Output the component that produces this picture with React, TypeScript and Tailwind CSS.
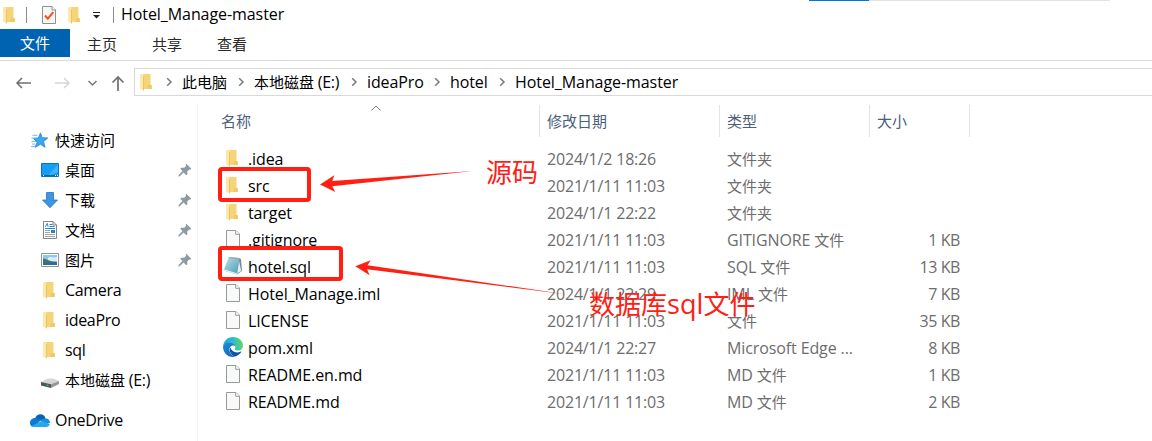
import type { ReactNode } from "react";

/* Splits a label into CJK and Latin runs so that each gets its own metrics. */
function Txt({ children, latin = "text-[16px] tracking-[-0.11px]" }: { children: string; latin?: string }) {
  const runs = children.match(/[\u4e00-\u9fff]+|[^\u4e00-\u9fff]+/g) ?? [];
  return (
    <span className="whitespace-pre">
      {runs.map((run, i) => (
        <span key={i} className={/[\u4e00-\u9fff]/.test(run) ? "" : `leading-[20px] ${latin}`}>
          {run}
        </span>
      ))}
    </span>
  );
}

function Folder() {
  return (
    <svg width="14" height="18" viewBox="0 0 14 18" className="shrink-0">
      <path d="M4 1h7.500v11.500h1.200V16H4z" fill="#f6d579" />
      <path d="M8.700 12h4v4h-4z" fill="#f0c966" />
      <path d="M1 1h3l1 2v14.500L1 15.800z" fill="#fce9a9" />
      <path d="M4 2.600l1 .9v14L4 17z" fill="#e9c369" />
    </svg>
  );
}

function Page() {
  return (
    <svg width="16" height="20" viewBox="0 0 16 20" className="shrink-0">
      <path d="M1.500 1.500h9.500l3.500 3.500v13.500h-13z" fill="#f8f9f9" stroke="#989898" />
      <path d="M10.700 1.500v3.800h3.800" fill="#fff" stroke="#989898" />
    </svg>
  );
}

function SqlIcon() {
  return (
    <svg width="20" height="20" viewBox="0 0 20 20" className="shrink-0">
      <defs>
        <linearGradient id="note" x1="0" y1="0" x2="1" y2="1">
          <stop offset="0" stopColor="#bfe4ec" />
          <stop offset="1" stopColor="#4799b3" />
        </linearGradient>
      </defs>
      <path d="M16 2l2 1 1 12-5 3.500z" fill="#7b8b92" />
      <path d="M16 5l2.200 10-4.200 2.500z" fill="#e8eeee" />
      <path d="M6 1l10.500 1L14 18.500 .5 14.500z" fill="url(#note)" />
      <path d="M6 1l10.500 1-.2 1.400L5.500 2.300z" fill="#9aaab0" />
      <path d="M.5 14.500L14 18.500l.2-1.200L1 13.300z" fill="#dff0f3" />
    </svg>
  );
}

function Edge() {
  return (
    <svg width="20" height="20" viewBox="0 0 20 20" className="shrink-0">
      <defs>
        <linearGradient id="eg" x1="0" y1="0.5" x2="1" y2="0.4">
          <stop offset="0" stopColor="#1ba3e2" />
          <stop offset="0.5" stopColor="#2dbdcb" />
          <stop offset="1" stopColor="#62d957" />
        </linearGradient>
        <linearGradient id="eb" x1="0" y1="0" x2="0.6" y2="1">
          <stop offset="0" stopColor="#1791de" />
          <stop offset="1" stopColor="#1468bd" />
        </linearGradient>
      </defs>
      <path d="M0 9.500C.5 4 4.600 0 10 0c6 0 10 4.300 10 8.600 0 3-2.200 5-5 5-2.400 0-3.800-.9-3.500-1.600.3-.6.900-1 .900-2.300C12.400 7.500 10 5.700 6.500 5.700 3 5.700.8 7.500 0 9.500z" fill="url(#eg)" />
      <path d="M0 9.500C.7 7 3.300 5.600 6.200 5.600c3.600 0 6.100 1.900 6.200 4-.7-.8-1.600-1.200-2.700-1C7.500 9 6.200 11 6.400 13.300c.3 3 2.600 5.400 5.400 6.400-.6.200-1.200.3-1.800.3C4.300 20 0 15.500 0 9.500z" fill="url(#eb)" />
      <path d="M7.300 10.500c-1.800 4 1.400 8.500 5 9 2.300-.5 4.600-2.200 6-4.400.3-.5-.1-.8-.5-.6-4.500 2.200-9.300.2-10.500-4z" fill="#12539f" />
      <path d="M12.300 9.500c0 1.500-1.200 2-1 2.700.3.800 1.600 1.300 3.200 1.400-3 .7-6-.7-6.500-3 .6-1.800 3.300-2.600 4.300-1.100z" fill="#fff" />
    </svg>
  );
}

function Pin() {
  return (
    <svg width="14" height="14" viewBox="0 0 14 14" className="shrink-0">
      <path d="M8.300.8l5 4.900-1.100 1-1-.3-2 2 .2 2.900-1.100 1-2.700-2.700L1.400 13.500l-1-.3.3-1.300 3.800-3.800-2.300-2.400 1-1 3 .1 2-2-.6-1z" fill="#8d99a3" />
    </svg>
  );
}

function Chevron() {
  return (
    <svg width="7" height="10" viewBox="0 0 7 10" className="shrink-0">
      <path d="M1.200 1.200L5 5 1.200 8.800" fill="none" stroke="#7a7a7a" strokeWidth="1.500" />
    </svg>
  );
}

function Star() {
  return (
    <svg width="18" height="16" viewBox="1 0 19 17">
      <path d="M11 1l1.800 5 6 .3-4.500 3.800 1.600 6.200L11 13l-5.600 3.300 2-5.500-3.800-4 5.200-.5z" fill="#39a8ef" stroke="#1b7fcf" strokeWidth=".8" />
      <path d="M2.500 3.500h5.200M1.500 6.500H6M1.500 10h5M2 12.800h3.500M1 15.500h4" stroke="#61b7ee" strokeWidth="1" />
    </svg>
  );
}

function Desktop() {
  return (
    <svg width="18" height="14" viewBox="0 0 18 14">
      <path d="M.5.5h17v13H.5z" fill="#169df5" stroke="#0b73bd" />
      <path d="M17 1v8L7 13z" fill="#42b2fb" />
      <path d="M1 12.500h16" stroke="#0868af" />
      <path d="M2 12.500h1m11 0h1m1 0h1" stroke="#fff" />
    </svg>
  );
}

function Download() {
  return (
    <svg width="18" height="18" viewBox="0 0 18 18">
      <path d="M5.500 1.500h7v7.500h4L9 16.800 1.500 9h4z" fill="#3c95e3" stroke="#2478c5" strokeWidth=".8" />
    </svg>
  );
}

function Doc() {
  return (
    <svg width="16" height="18" viewBox="0 0 16 18">
      <path d="M1.500.5H11l3.500 3.500v13.500h-13z" fill="#fff" stroke="#858585" />
      <path d="M11 .5V4h3.500" fill="none" stroke="#858585" />
      <path d="M3.300 5.800l2-3.500.8 3.500M7.500 3.500h3M7.500 5.500h5M3 7.500h10" fill="none" stroke="#2189d5" />
      <path d="M3 9.500h5M3 11.500h5M3 13.500h10M3 15.500h10" stroke="#9aa3a8" />
      <path d="M9 9h4v3H9z" fill="#3b80ad" />
    </svg>
  );
}

function Picture() {
  return (
    <svg width="18" height="14" viewBox="0 0 18 14">
      <path d="M.5.5h17v13H.5z" fill="#fff" stroke="#929292" />
      <path d="M2 2h14v10H2z" fill="#8fc6ee" />
      <path d="M7 5c2-2 3 0 9-1v4H7z" fill="#d9edf7" />
      <path d="M2 5.500c4 .2 6 2.500 9 3l5 .5v1H2z" fill="#3b7962" />
      <path d="M2 9.500h14V12H2z" fill="#326a99" />
    </svg>
  );
}

function Drive() {
  return (
    <svg width="18" height="10" viewBox="0 0 18 10">
      <path d="M0 4l7-3.500h5L18 3l-8 3.500z" fill="#d5d5d8" />
      <path d="M0 4l10 2.300V10L0 7.500z" fill="#4e5355" />
      <path d="M10 6.300L18 3v3l-8 4z" fill="#96979b" />
      <path d="M5.500 7.200h2" stroke="#42d15c" strokeWidth="1.200" />
    </svg>
  );
}

function Cloud() {
  return (
    <svg width="20" height="13" viewBox="0 0 20 13">
      <path d="M5 4.500C6.500-.5 14-1.500 15.500 4.500l-3 3z" fill="#0b62b5" />
      <path d="M4.500 13C1 13 0 11 0 8.800 0 6 2.500 4 5.500 4c2 0 3.500 1.200 5 2.200L5 13z" fill="#0c79d2" />
      <path d="M10 6l5.500-1.800C18.500 4.500 20 6.500 20 9l-5 1z" fill="#1590df" />
      <path d="M1.500 12L12 6.700l7.800 3.600c-.5 1.800-1.800 2.700-3.800 2.700H4.500C3.200 13 2.200 12.700 1.500 12z" fill="#29a7eb" />
    </svg>
  );
}

function NavItem({ icon, label, pinned, root }: { icon: ReactNode; label: string; pinned?: boolean; root?: boolean }) {
  return (
    <div className={`flex h-[30px] items-center pr-[5px] ${root ? "pl-[30px]" : "pl-10"}`}>
      <span className="flex w-5 shrink-0 items-center justify-center">{icon}</span>
      <span className="ml-[5px] flex-1">
        <Txt latin="text-[16px] tracking-[-0.32px]">{label}</Txt>
      </span>
      {pinned && <Pin />}
    </div>
  );
}

const files = [
  { name: ".idea", date: "2024/1/2 18:26", type: "文件夹", size: "", icon: "folder" },
  { name: "src", date: "2021/1/11 11:03", type: "文件夹", size: "", icon: "folder" },
  { name: "target", date: "2024/1/1 22:22", type: "文件夹", size: "", icon: "folder" },
  { name: ".gitignore", date: "2021/1/11 11:03", type: "GITIGNORE 文件", size: "1 KB", icon: "page" },
  { name: "hotel.sql", date: "2021/1/11 11:03", type: "SQL 文件", size: "13 KB", icon: "sql" },
  { name: "Hotel_Manage.iml", date: "2024/1/1 22:29", type: "IML 文件", size: "7 KB", icon: "page" },
  { name: "LICENSE", date: "2021/1/11 11:03", type: "文件", size: "35 KB", icon: "page" },
  { name: "pom.xml", date: "2024/1/1 22:27", type: "Microsoft Edge ...", size: "8 KB", icon: "edge" },
  { name: "README.en.md", date: "2021/1/11 11:03", type: "MD 文件", size: "1 KB", icon: "page" },
  { name: "README.md", date: "2021/1/11 11:03", type: "MD 文件", size: "2 KB", icon: "page" },
];

const icons: Record<string, ReactNode> = { folder: <Folder />, page: <Page />, sql: <SqlIcon />, edge: <Edge /> };

export default function App() {
  return (
    <div className="relative flex h-[441px] w-[1152px] flex-col overflow-hidden bg-white font-['Open_Sans','Noto_Sans_CJK_SC',sans-serif] text-[15px] leading-[20px] text-black">
      <header className="flex h-[29px] items-center">
        <span className="ml-[2px]"><Folder /></span>
        <span className="ml-[10px] h-4 w-px bg-[#8a8a8a]" />
        <svg width="16" height="18" viewBox="0 0 16 18" className="ml-[14px]">
          <path d="M1.500.5H11l3.500 3.500v13.500h-13z" fill="#f7f7f7" stroke="#8f8f8f" />
          <path d="M11 .5V4h3.500" fill="#fff" stroke="#8f8f8f" />
          <path d="M4 9.500l2.800 3.200 5.500-6.500" fill="none" stroke="#e8561c" strokeWidth="2" />
        </svg>
        <span className="ml-[10px]"><Folder /></span>
        <svg width="9" height="7" viewBox="0 0 9 7" className="ml-[11px] mt-[2px]">
          <path d="M1 .5h7" stroke="#222" />
          <path d="M1 3h7L4.500 6.500z" fill="#222" />
        </svg>
        <span className="ml-[12px] h-4 w-px bg-[#8a8a8a]" />
        <span className="mb-[2px] ml-[7px]"><Txt latin="text-[16px] tracking-[-0.07px]">Hotel_Manage-master</Txt></span>
        <span className="ml-auto mr-[42px] flex h-px w-[301px] self-start bg-[#e3e3e3]">
          <span className="h-px w-[60px] bg-[#0078d7]" />
        </span>
      </header>

      <nav className="flex h-8 shrink-0 border-b border-[#dadada] text-[#2b2b2b]">
        <span className="flex h-7 w-[70px] items-center justify-center bg-[#0063b1] text-white">文件</span>
        <span className="ml-[17px] mt-[5px]">主页</span>
        <span className="ml-[35px] mt-[5px]">共享</span>
        <span className="ml-[35px] mt-[5px]">查看</span>
      </nav>

      <div className="flex h-[43px] shrink-0 items-start pt-[7px]">
        <svg width="134" height="28" viewBox="0 0 134 28" fill="none" className="shrink-0">
          <path d="M31 15H17m5-5l-5 5 5 5" stroke="#6f6f6f" strokeWidth="1.500" />
          <path d="M55 15h14m-5-5l5 5-5 5" stroke="#d5d5d5" strokeWidth="1.500" />
          <path d="M88.500 13l4 4 4-4" stroke="#777" strokeWidth="1.500" />
          <path d="M118 23V9m-5.500 5.500L118 9l5.500 5.500" stroke="#6f6f6f" strokeWidth="1.700" />
        </svg>
        <div className="flex h-7 flex-1 items-center border border-r-0 border-[#d9d9d9] pb-px pl-1">
          <Folder />
          <span className="ml-[13px] flex"><Chevron /></span>
          <span className="ml-[9px] w-[45px]">此电脑</span>
          <span className="ml-[11px] flex"><Chevron /></span>
          <span className="ml-[9px] w-[87px]"><Txt latin="text-[16px] tracking-[-0.32px]">本地磁盘 (E:)</Txt></span>
          <span className="ml-[10px] flex"><Chevron /></span>
          <span className="ml-[9px] w-[57px]"><Txt>ideaPro</Txt></span>
          <span className="ml-[10px] flex"><Chevron /></span>
          <span className="ml-[9px] w-[39px]"><Txt>hotel</Txt></span>
          <span className="ml-[10px] flex"><Chevron /></span>
          <span className="ml-[9px]"><Txt latin="text-[16px] tracking-[-0.07px]">Hotel_Manage-master</Txt></span>
        </div>
      </div>

      <main className="flex min-h-0 flex-1">
        <aside className="w-[198px] shrink-0 border-r border-[#f2f2f2] pt-[21px]">
          <NavItem root icon={<Star />} label="快速访问" />
          <NavItem pinned icon={<Desktop />} label="桌面" />
          <NavItem pinned icon={<Download />} label="下载" />
          <NavItem pinned icon={<Doc />} label="文档" />
          <NavItem pinned icon={<Picture />} label="图片" />
          <NavItem icon={<span className="mr-[2px]"><Folder /></span>} label="Camera" />
          <NavItem icon={<span className="mr-[2px]"><Folder /></span>} label="ideaPro" />
          <NavItem icon={<span className="mr-[2px]"><Folder /></span>} label="sql" />
          <NavItem icon={<span className="mt-[6px]"><Drive /></span>} label="本地磁盘 (E:)" />
          <div className="h-[10px]" />
          <NavItem root icon={<Cloud />} label="OneDrive" />
        </aside>

        <section className="w-[772px]">
          <div className="mt-px flex h-8 items-center text-[#4c607a]">
            <span className="relative flex h-8 w-[342px] items-center border-r border-[#e3e3e3] pl-[23px]">
              名称
              <svg width="10" height="6" viewBox="0 0 10 6" className="absolute left-[173px] top-[0px]">
                <path d="M.5 5.500L5 1l4.500 4.500" fill="none" stroke="#777" />
              </svg>
            </span>
            <span className="flex h-8 w-[180px] items-center border-r border-[#e3e3e3] pl-[7px]">修改日期</span>
            <span className="flex h-8 w-[150px] items-center border-r border-[#e3e3e3] pl-[7px]">类型</span>
            <span className="flex h-8 w-[100px] items-center border-r border-[#e3e3e3] pl-[7px]">大小</span>
          </div>
          <div className="mt-[8px]">
            {files.map((f) => (
              <div key={f.name} className="flex h-[27px] items-center text-[#6d6d6d]">
                <span className="ml-[25px] flex w-[25px] shrink-0">
                  <span className={f.icon === "folder" ? "mb-px ml-[2px]" : f.icon === "page" ? "mb-[2px] ml-[2px]" : "mb-px"}>{icons[f.icon]}</span>
                </span>
                <span className="w-[299px] text-black"><Txt>{f.name}</Txt></span>
                <span className="w-[180px]"><Txt latin="text-[16px] tracking-[-0.18px]">{f.date}</Txt></span>
                <span className="w-[150px]"><Txt>{f.type}</Txt></span>
                <span className="w-[83px] text-right"><Txt latin="text-[16px] tracking-[-0.4px]">{f.size}</Txt></span>
              </div>
            ))}
          </div>
        </section>
      </main>

      <div className="absolute left-[218px] top-[167px] h-[35px] w-[93px] rounded-[4px] border-4 border-[#ff2013]" />
      <div className="absolute left-[218px] top-[246px] h-[35px] w-[125px] rounded-[4px] border-4 border-[#ff2013]" />
      <svg width="1152" height="441" viewBox="0 0 1152 441" className="pointer-events-none absolute inset-0" fill="#ff2013">
        <path d="M320 184.500l14.300-9.200-2 5.700L473 171l-140.700 15.300 3 5.700z" />
        <path d="M355.300 266.300l15.400-6-3.200 5L567 294.500l-200-25.200 2.700 6z" />
      </svg>
      <span className="absolute left-[486px] top-[155px] text-[26px] leading-[34px] text-[#ff2013]">源码</span>
      <span className="absolute left-[589px] top-[287px] text-[26px] leading-[34px] text-[#ff2013]">
        <Txt latin="text-[27px] tracking-[0.1px]">数据库sql文件</Txt>
      </span>
    </div>
  );
}
